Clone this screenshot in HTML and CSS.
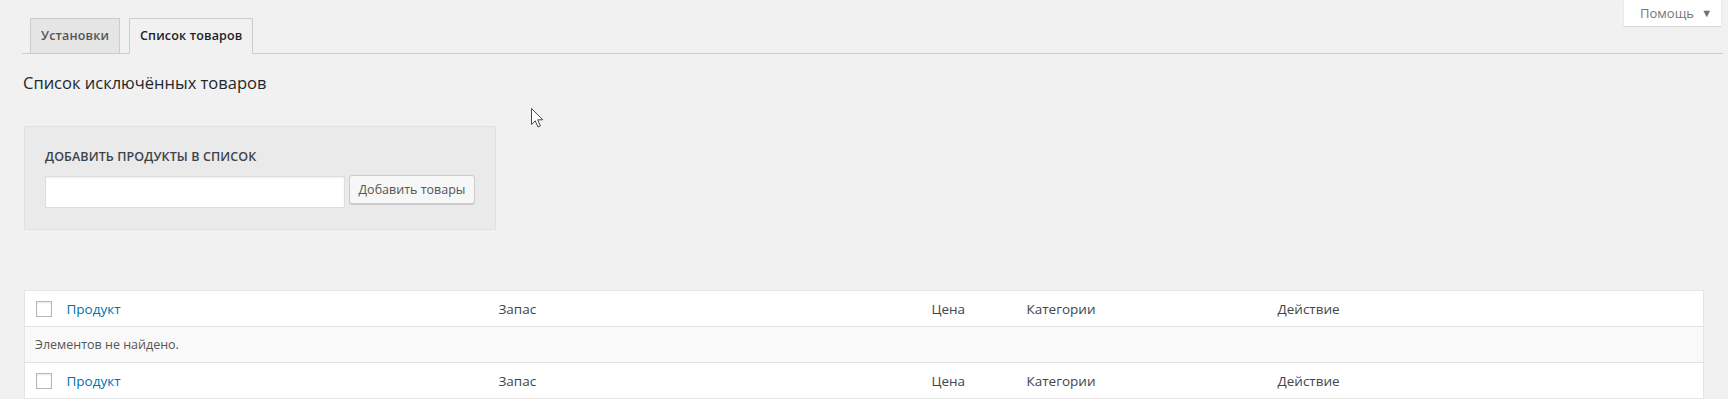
FILE: index.html
```html
<!DOCTYPE html>
<html lang="ru">
<head>
  <meta charset="UTF-8" />
  <meta name="viewport" content="width=device-width, initial-scale=1.0"/>
  <title>Список исключённых товаров</title>
  <link rel="stylesheet" href="styles.css">
</head>
<body>
  <div class="screen-meta">
    <button class="help-link">Помощь <span class="arrow">&#9660;</span></button>
  </div>

  <div class="wrap">
    <nav class="nav-tabs">
      <a href="#" class="nav-tab">Установки</a>
      <a href="#" class="nav-tab nav-tab-active">Список товаров</a>
    </nav>

    <h2 class="page-title">Список исключённых товаров</h2>

    <div class="content">
      <form class="add-box">
        <label for="products" class="add-label">Добавить продукты в список</label>
        <div class="add-row">
          <input type="text" id="products" class="add-input">
          <button type="button" class="button">Добавить товары</button>
        </div>
      </form>

      <table class="list-table">
        <colgroup>
          <col class="col-check">
          <col class="col-product">
          <col class="col-stock">
          <col class="col-price">
          <col class="col-cats">
          <col>
        </colgroup>
        <thead>
          <tr>
            <td class="check-column"><input type="checkbox"></td>
            <th><a href="#">Продукт</a></th>
            <th>Запас</th>
            <th>Цена</th>
            <th>Категории</th>
            <th>Действие</th>
          </tr>
        </thead>
        <tbody>
          <tr class="no-items">
            <td colspan="6">Элементов не найдено.</td>
          </tr>
        </tbody>
        <tfoot>
          <tr>
            <td class="check-column"><input type="checkbox"></td>
            <th><a href="#">Продукт</a></th>
            <th>Запас</th>
            <th>Цена</th>
            <th>Категории</th>
            <th>Действие</th>
          </tr>
        </tfoot>
      </table>
    </div>
  </div>

  <!-- mouse pointer from the screenshot -->
  <svg class="cursor" width="14" height="22" viewBox="0 0 14 22">
    <path d="M1.5 1.5 L1.5 17.5 L5.2 13.8 L8 20 L10.4 19 L7.7 12.8 L12.8 12.8 Z" fill="#fff" stroke="#4a4a4a" stroke-width="1" stroke-linejoin="round"/>
  </svg>
</body>
</html>
```

FILE: styles.css
```css
* {
  box-sizing: border-box;
  margin: 0;
  padding: 0;
}

body {
  font-family: 'Open Sans', 'Noto Sans', sans-serif;
  font-size: 13px;
  background: #f1f1f1;
  color: #444;
  position: relative;
  min-height: 399px;
}

/* help tab, top right */
.screen-meta {
  display: flex;
  justify-content: flex-end;
  padding-right: 7px;
  height: 18px;
}

.help-link {
  height: 26px;
  width: 97px;
  border: none;
  background: #fff;
  color: #72777c;
  font-family: inherit;
  font-size: 13px;
  padding: 0 6px 0 16px;
  text-align: left;
  box-shadow: 0 1px 1px rgba(0, 0, 0, 0.08), 0 0 0 1px rgba(0, 0, 0, 0.02);
  position: relative;
  z-index: 2;
}

.help-link .arrow {
  font-size: 11px;
  margin-left: 4px;
  color: #6b7075;
  position: relative;
  top: -1px;
}

.wrap {
  padding: 0 5px 0 22px;
}

.nav-tabs {
  display: flex;
  border-bottom: 1px solid #ccc;
  padding-left: 8px;
}

.nav-tab {
  display: block;
  font-size: 12.5px;
  line-height: 24px;
  font-weight: 600;
  letter-spacing: 0.15px;
  padding: 5px 10px;
  margin-bottom: -1px;
  border: 1px solid #ccc;
  background: #e5e5e5;
  color: #555;
  text-decoration: none;
}

.nav-tab + .nav-tab {
  margin-left: 9px;
}

.nav-tab-active {
  background: #f1f1f1;
  border-bottom-color: #f1f1f1;
  color: #1d2327;
}

.page-title {
  font-size: 16.5px;
  font-weight: 400;
  line-height: 22px;
  color: #23282d;
  margin-top: 18px;
  padding-left: 1px;
}

.content {
  margin: 0 19px 0 2px;
}

.add-box {
  width: 472px;
  margin-top: 32px;
  padding: 22px 20px 21px;
  background: #eaeaea;
  border: 1px solid #e1e1e1;
}

.add-label {
  display: block;
  font-size: 12.5px;
  line-height: 16px;
  font-weight: 600;
  letter-spacing: 0.1px;
  text-transform: uppercase;
  color: #3c434a;
  margin-bottom: 11px;
}

.add-row {
  display: flex;
  align-items: flex-start;
}

.add-input {
  width: 300px;
  height: 32px;
  border: 1px solid #ddd;
  background: #fff;
  box-shadow: inset 0 1px 2px rgba(0, 0, 0, 0.07);
  outline: none;
}

.button {
  margin-left: 4px;
  margin-top: -1px;
  height: 29px;
  width: 126px;
  padding: 0 6px;
  white-space: nowrap;
  font-family: inherit;
  font-size: 12.5px;
  color: #555;
  background: #f7f7f7;
  border: 1px solid #ccc;
  border-radius: 3px;
  box-shadow: 0 1px 0 #ccc;
  cursor: pointer;
}

.list-table {
  width: 100%;
  margin-top: 60px;
  border-collapse: collapse;
  table-layout: fixed;
  background: #fff;
  border: 1px solid #e5e5e5;
  box-shadow: 0 1px 1px rgba(0, 0, 0, 0.04);
}

.col-check { width: 32px; }
.col-product { width: 432px; }
.col-stock { width: 433px; }
.col-price { width: 95px; }
.col-cats { width: 251px; }

.list-table th,
.list-table td {
  height: 36px;
  padding: 0 10px;
  text-align: left;
  vertical-align: middle;
  font-weight: 400;
}

.list-table th {
  font-size: 13.5px;
  color: #40464c;
}

.list-table th a {
  color: #0073aa;
  text-decoration: none;
}

.list-table thead tr {
  border-bottom: 1px solid #e1e1e1;
}

.list-table tfoot tr {
  border-top: 1px solid #e1e1e1;
}

.check-column {
  padding-left: 11px !important;
}

.check-column input {
  -webkit-appearance: none;
  appearance: none;
  display: block;
  width: 16px;
  height: 16px;
  border: 1px solid #b4b9be;
  background: #fff;
  box-shadow: inset 0 1px 2px rgba(0, 0, 0, 0.1);
  margin: 0;
}

.no-items td {
  background: #f9f9f9;
  font-size: 12.5px;
  color: #555;
}

.cursor {
  position: absolute;
  left: 530px;
  top: 107px;
}
```
